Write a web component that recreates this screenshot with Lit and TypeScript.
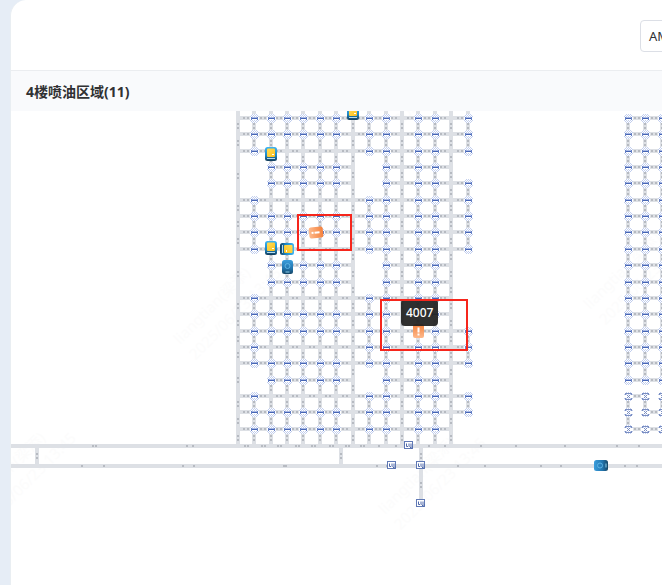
import { LitElement, css, html, svg } from "lit";
import { customElement } from "lit/decorators.js";

const COLS = [238, 254, 271, 287, 303, 320, 336, 353, 369, 386, 402, 418, 435, 451, 468];
const ROWS = [118, 134, 151, 167, 183, 200, 216, 232, 249, 265, 282, 298, 314, 331, 347, 363, 380, 396, 412, 429];
const EAST = [628, 645, 662];
const TOP_Y = 104;
const MAIN_Y = 446;

// Rows in which the outer shelves of each block have a stop.
const WEST_STOPS = [0, 1, 2, 5, 6, 7, 8, 11, 12, 13, 14, 15, 17, 18, 19];
const END_STOPS = [0, 1, 2, 4, 5, 6, 7, 8, 13, 14, 15, 17, 18];
// Rows that cross the first block without stopping.
const PASS_ROWS = [2, 5, 8, 11, 14, 17];

type Edge = [number, number, number, number];

const hasNode = (c: number, r: number): boolean => {
  if (c === 0 || c === 1 || c === 8) return WEST_STOPS.includes(r);
  if (c === 14) return END_STOPS.includes(r);
  return true;
};

const isStop = (c: number, r: number): boolean => {
  if ([0, 7, 10, 13].includes(c) || !hasNode(c, r)) return false;
  return !(c > 1 && c < 7 && PASS_ROWS.includes(r));
};

const buildEdges = (): Edge[] => {
  const edges: Edge[] = [];
  ROWS.forEach((y, r) => {
    for (let c = 0; c < COLS.length - 1; c++) {
      if (hasNode(c, r) && hasNode(c + 1, r)) edges.push([COLS[c], y, COLS[c + 1], y]);
    }
    if (r < 17) {
      edges.push([EAST[0], y, EAST[1], y], [EAST[1], y, EAST[2], y]);
      if (r < 16) EAST.forEach((x) => edges.push([x, y, x, ROWS[r + 1]]));
    }
  });
  COLS.forEach((x, c) => {
    const nodes = ROWS.map((_, r) => r).filter((r) => hasNode(c, r));
    edges.push([x, TOP_Y, x, ROWS[0]]);
    nodes.forEach((r, i) => {
      const next = nodes[i + 1];
      if (next !== undefined && (c === 0 || next === r + 1)) edges.push([x, ROWS[r], x, ROWS[next]]);
    });
    if (c < 14) edges.push([x, ROWS[19], x, MAIN_Y]);
  });
  edges.push(
    [EAST[0], ROWS[17], EAST[1], ROWS[17]],
    [EAST[1], ROWS[18], EAST[2], ROWS[18]],
    [EAST[0], ROWS[19], EAST[1], ROWS[19]],
    [EAST[1], ROWS[19], EAST[2], ROWS[19]],
    [EAST[0], ROWS[17], EAST[0], ROWS[18]],
    [EAST[1], ROWS[17], EAST[1], ROWS[18]],
    [EAST[2], ROWS[17], EAST[2], ROWS[18]],
    [EAST[0], ROWS[18], EAST[0], ROWS[19]],
    [37, MAIN_Y, 37, 466],
    [341, MAIN_Y, 341, 466],
    [421, MAIN_Y, 421, 466],
    [421, 466, 421, 503],
  );
  return edges;
};

const EDGES = buildEdges();
const UPPER_PAIRS = [94, 246, 263, 279, 297, 313, 331, 347, 362];
const UPPER_DOTS = [187, 193, 379, 396, 429, 445, 481, 516, 565, 617, 639];
const LOWER_DOTS = [82, 104, 183, 194, 284, 286, 377, 387, 458, 485, 541, 561, 625, 637];
const LIFTS = [[408, 445], [391, 465], [420, 465], [420, 503]];
const WATERMARKS = [[-10, 100], [-25, 510], [385, 515], [180, 345], [385, 110], [590, 310]];

const dither = (): string => {
  let d = "";
  for (let y = -4; y <= 4; y++) {
    if (Math.abs(y) < 2) continue;
    for (let x = -4; x <= 4; x++) {
      if ((x + y) % 2 === 0 && !(Math.abs(y) === 4 && Math.abs(x) === 4)) d += `M${x} ${y}h1v1h-1z`;
    }
  }
  return d;
};
const DITHER = dither();

@customElement("fleet-map")
export class FleetMap extends LitElement {
  static styles = css`
    :host { display: block; position: relative; flex: 1; overflow: hidden; background: #fff; }
    .canvas { display: block; width: 100%; height: 100%; min-height: 474px; }
    .road { stroke: #dde0e5; stroke-width: 4; fill: none; }
    .mark { fill: #b6bac1; }
    .zone { fill: none; stroke: #f6261c; stroke-width: 2; }
    .stamp { fill: #fcfcfc; font: 15px "Noto Sans", "Noto Sans CJK SC", sans-serif; }
    .tip {
      position: absolute; left: 390px; top: 188px; padding: 0 5px; border-radius: 4px;
      background: rgba(32, 32, 32, 0.93); color: #fff;
      font: 500 12px/27px "Noto Sans", sans-serif;
    }
    .zones { position: absolute; left: 0; top: 0; width: 100%; height: 100%; pointer-events: none; }
  `;

  private defs() {
    return svg`<defs>
      <linearGradient id="sky" x1="0" y1="0" x2="0" y2="1"><stop offset="0" stop-color="#3db4f4"/><stop offset=".6" stop-color="#1e87c6"/><stop offset="1" stop-color="#123c59"/></linearGradient>
      <linearGradient id="deep" x1="0" y1="0" x2="0" y2="1"><stop offset="0" stop-color="#3a9ddc"/><stop offset=".6" stop-color="#2275ae"/><stop offset="1" stop-color="#174666"/></linearGradient>
      <linearGradient id="alert" x1="0" y1="0" x2="0" y2="1"><stop offset="0" stop-color="#f5813b"/><stop offset="1" stop-color="#fdb98c"/></linearGradient>
      <linearGradient id="sun" x1="0" y1="0" x2="1" y2="1"><stop offset="0" stop-color="#ffdd55"/><stop offset="1" stop-color="#fdc01f"/></linearGradient>
      <g id="stop" shape-rendering="crispEdges">
        <rect x="-4" y="-4" width="9" height="9" fill="#fff"/>
        <path d=${DITHER} fill="#c3cfee"/>
        <path d="M-3-1h1v3h-1zM3-1h1v3h-1z" fill="#6480c6"/>
        <path d="M-2-1h5v1h-5z" fill="#a9b9e4"/>
        <path d="M-2 0h5v1h-5z" fill="#4564b4"/>
      </g>
      <g id="cross" shape-rendering="crispEdges">
        <rect x="-4" y="-4" width="9" height="9" fill="#fff"/>
        <path d=${DITHER} fill="#c3cfee"/>
        <path d="M-2-3h5v1h-5zM-2 3h5v1h-5zM-1-1h1v1h-1zM1-1h1v1h-1zM0 0h1v1h-1zM-1 1h1v1h-1zM1 1h1v1h-1zM-3-3h1v2h-1zM3-3h1v2h-1zM-3 2h1v2h-1zM3 2h1v2h-1z" fill="#7a8ec2"/>
      </g>
      <g id="lift">
        <rect x="-3.5" y="-3.5" width="8" height="7" fill="#fff" stroke="#6079b5"/>
        <path d="M-1.5-1.5v3h1.5M1-1.5v3M3-1.5v4M1.5 1.5l2 2l1-2" fill="none" stroke="#4f69aa"/>
      </g>
      <g id="loaded">
        <rect x="-5" y="-7" width="12" height="14" rx="2.5" fill="url(#sky)"/>
        <rect x="-3" y="-5.5" width="8" height="8.5" rx="1" fill="url(#sun)"/>
        <rect x="2" y="0" width="2" height="1" fill="#fff"/>
        <path d="M-3 4.5h8" stroke="#b7dced"/>
      </g>
      <g id="idle">
        <rect x="-5" y="-7" width="11" height="14" rx="2.5" fill="url(#deep)"/>
        <circle cx=".5" cy="-1" r="2.5" fill="none" stroke="#5cb3e4"/>
        <path d="M-1.5 5h4" stroke="#8ed1ee"/>
      </g>
      <g id="fault">
        <rect x="-5" y="-7" width="11" height="14" rx="2" fill="url(#alert)"/>
        <path d="M.5-3.5v5M.5 2.5v2" stroke="#fff" stroke-width="2"/>
      </g>
    </defs>`;
  }

  private mark([x1, y1, x2, y2]: Edge) {
    const x = Math.round((x1 + x2) / 2);
    const y = Math.round((y1 + y2) / 2);
    return y1 === y2 ? `M${x - 3} ${y - 1}h2v2h-2zM${x + 1} ${y - 1}h2v2h-2z` : `M${x - 1} ${y - 3}h2v2h-2zM${x - 1} ${y + 1}h2v2h-2z`;
  }

  private use(id: string, x: number, y: number, turn = 0) {
    return svg`<use href="#${id}" transform="translate(${x} ${y}) rotate(${turn})"/>`;
  }

  render() {
    const roads = EDGES.map(([a, b, c, d]) => `M${a} ${b}L${c} ${d}`).join("");
    const marks = EDGES.filter((e) => e[1] !== TOP_Y).map((e) => this.mark(e)).join("");
    const mains = [
      ...UPPER_PAIRS.map((x) => `M${x - 2} 445h2v2h-2zM${x + 1} 445h2v2h-2z`),
      ...UPPER_DOTS.map((x) => `M${x - 1} 445h2v2h-2z`),
      ...LOWER_DOTS.map((x) => `M${x - 1} 465h2v2h-2z`),
    ].join("");
    return html`
      <svg class="canvas" role="img" aria-label="AMR map">
        ${this.defs()}
        <g transform="translate(-11 -111)">
          ${WATERMARKS.map(([x, y]) => svg`<g class="stamp" aria-hidden="true" transform="translate(${x} ${y}) rotate(-45)"><text>liangtian(梁添)</text><text y="22">2025/06/23 13:45</text></g>`)}
          <g shape-rendering="crispEdges">
            <path class="road" d="M11 ${MAIN_Y}H4000M11 466H4000"/>
            <path class="road" d=${roads}/>
            <path class="mark" d=${marks + mains}/>
          </g>
          ${ROWS.map((y, r) => COLS.map((x, c) => (isStop(c, r) ? this.use("stop", x, y) : null)))}
          ${ROWS.map((y, r) => EAST.map((x) => this.use(r < 17 ? "stop" : "cross", x, y)))}
          ${LIFTS.map(([x, y]) => this.use("lift", x, y))}
          ${this.use("loaded", 352, 113)}
          ${this.use("loaded", 270, 154)}
          ${this.use("loaded", 270, 248)}
          ${this.use("loaded", 287, 248, 90)}
          ${this.use("idle", 287, 267)}
          ${this.use("idle", 601, 466, -90)}
          ${this.use("fault", 316, 232, 84)}
          ${this.use("fault", 418, 331)}
        </g>
      </svg>
      <div class="tip" role="tooltip">4007</div>
      <svg class="zones" aria-hidden="true">
        <rect class="zone" x="287" y="104" width="53" height="35"/>
        <rect class="zone" x="370" y="189" width="86" height="50"/>
      </svg>
    `;
  }
}

@customElement("app-root")
export class AppRoot extends LitElement {
  static styles = css`
    :host {
      display: block; box-sizing: border-box; min-height: 100vh; padding-left: 10px; overflow: hidden;
      background: #e6edf6; color: #303133;
      font: 14px/20px "Noto Sans", "Noto Sans CJK SC", sans-serif;
    }
    .card {
      display: flex; flex-direction: column; box-sizing: border-box; min-height: 100vh; overflow: hidden;
      border-left: 1px solid #e9eef2; border-top-left-radius: 16px; background: #fff;
    }
    .bar { display: flex; justify-content: flex-end; align-items: center; height: 70px; padding-top: 2px; box-sizing: border-box; }
    .kind {
      flex: none; box-sizing: border-box; width: 102px; height: 32px; margin-right: -80px; padding: 0 8px;
      border: 1px solid #dcdfe6; border-radius: 4px; background: #fff; color: #303133;
      font: 13px/20px "Noto Sans", sans-serif; text-align: left;
    }
    .title { margin: 0; padding: 11px 15px 9px; border-top: 1px solid #ebedf0; background: #f9fafc; font-size: 14px; line-height: 20px; font-weight: 700; }
  `;

  render() {
    return html`
      <main class="card">
        <header class="bar"><button class="kind" type="button">AMR</button></header>
        <h1 class="title">4楼喷油区域(11)</h1>
        <fleet-map></fleet-map>
      </main>
    `;
  }
}
